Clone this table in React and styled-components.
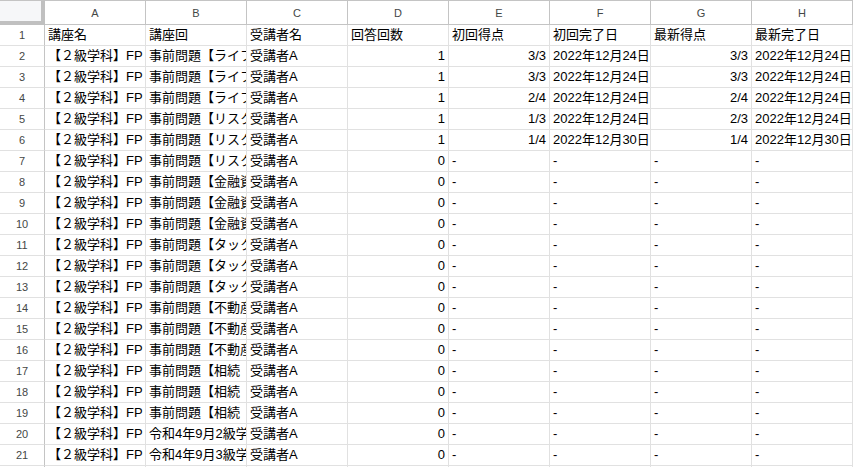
import React from 'react';
import styled, { createGlobalStyle } from 'styled-components';

const GlobalStyle = createGlobalStyle`
  html, body {
    margin: 0;
    padding: 0;
    background: #ffffff;
    overflow: hidden;
  }
  body {
    font-family: "Liberation Sans", "Noto Sans CJK JP", sans-serif;
  }
`;

const columns = ['A', 'B', 'C', 'D', 'E', 'F', 'G', 'H'];
const titles = ['講座名', '講座回', '受講者名', '回答回数', '初回得点', '初回完了日', '最新得点', '最新完了日'];

const COURSE = '【２級学科】FP２級 模擬講座';
const LIFE = '事前問題【ライフプランニング】';
const RISK = '事前問題【リスク管理】';
const KINYU = '事前問題【金融資産運用】';
const TAX = '事前問題【タックスプランニング】';
const FUDO = '事前問題【不動産】';
const SOZOKU = '事前問題【相続　事業承継】';

// [講座回, 回答回数, 初回得点, 初回完了日, 最新得点, 最新完了日]
const records = [
    [LIFE, 1, '3/3', '2022年12月24日', '3/3', '2022年12月24日'],
    [LIFE, 1, '3/3', '2022年12月24日', '3/3', '2022年12月24日'],
    [LIFE, 1, '2/4', '2022年12月24日', '2/4', '2022年12月24日'],
    [RISK, 1, '1/3', '2022年12月24日', '2/3', '2022年12月24日'],
    [RISK, 1, '1/4', '2022年12月30日', '1/4', '2022年12月30日'],
    [RISK, 0],
    [KINYU, 0],
    [KINYU, 0],
    [KINYU, 0],
    [TAX, 0],
    [TAX, 0],
    [TAX, 0],
    [FUDO, 0],
    [FUDO, 0],
    [FUDO, 0],
    [SOZOKU, 0],
    [SOZOKU, 0],
    [SOZOKU, 0],
    ['令和4年9月2級学科試験', 0],
    ['令和4年9月3級学科試験', 0],
    ['', ''],
];

const App = () => {
    return (
        <>
            <GlobalStyle />
            <Sheet>
                <Corner />
                {columns.map((c) => (
                    <ColHeader key={c}>{c}</ColHeader>
                ))}

                <RowHeader>1</RowHeader>
                {titles.map((t) => (
                    <Cell key={t}>{t}</Cell>
                ))}

                {records.map((r, i) => {
                    const [round, count, firstScore, firstDate, lastScore, lastDate] = r;
                    const empty = round === '';
                    const done = count > 0;
                    return (
                        <React.Fragment key={i}>
                            <RowHeader>{i + 2}</RowHeader>
                            <Cell>{empty ? '' : COURSE}</Cell>
                            <Cell>{round}</Cell>
                            <Cell>{empty ? '' : '受講者A'}</Cell>
                            <Cell $right>{count}</Cell>
                            <Cell $right={done}>{empty ? '' : done ? firstScore : '-'}</Cell>
                            <Cell>{empty ? '' : done ? firstDate : '-'}</Cell>
                            <Cell $right={done}>{empty ? '' : done ? lastScore : '-'}</Cell>
                            <Cell>{empty ? '' : done ? lastDate : '-'}</Cell>
                        </React.Fragment>
                    );
                })}
            </Sheet>
        </>
    );
};

export default App;

const Sheet = styled.div`
    display: grid;
    grid-template-columns: 45px repeat(8, 101px);
    grid-template-rows: 25px;
    grid-auto-rows: 21px;
    width: 853px;
`;

const Corner = styled.div`
    box-sizing: border-box;
    background: #f6f7f9;
    border-top: 1px solid #c4c4c4;
    border-right: 4px solid #c0c0c0;
    border-bottom: 4px solid #c0c0c0;
`;

const ColHeader = styled.div`
    box-sizing: border-box;
    display: flex;
    align-items: center;
    justify-content: center;
    background: #ffffff;
    border-top: 1px solid #c4c4c4;
    border-right: 1px solid #c4c4c4;
    border-bottom: 1px solid #c4c4c4;
    font-size: 11px;
    color: #444746;
`;

const RowHeader = styled.div`
    box-sizing: border-box;
    display: flex;
    align-items: center;
    justify-content: center;
    background: #ffffff;
    border-right: 1px solid #c4c4c4;
    border-bottom: 1px solid #e1e1e1;
    font-size: 11px;
    color: #444746;
`;

const Cell = styled.div`
    box-sizing: border-box;
    padding: 0 3px;
    border-right: 1px solid #e1e1e1;
    border-bottom: 1px solid #e1e1e1;
    font-size: 13px;
    line-height: 20px;
    color: #000000;
    white-space: nowrap;
    overflow: hidden;
    text-align: ${(p) => (p.$right ? 'right' : 'left')};
`;
